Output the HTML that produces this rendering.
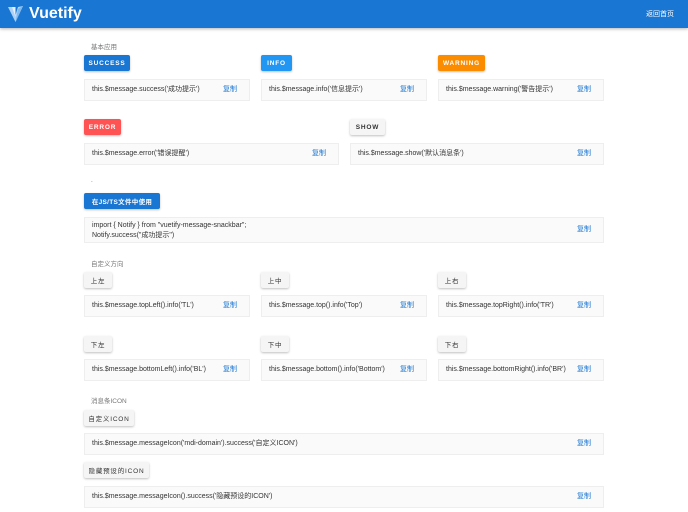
<!DOCTYPE html>
<html><head><meta charset="utf-8"><style>
*{margin:0;padding:0;box-sizing:border-box}
body{width:688px;height:512px;background:#fff;position:relative;overflow:hidden;font-family:"Liberation Sans","Noto Sans CJK SC",sans-serif;color:#333}
.hdr{position:absolute;left:0;top:0;width:688px;height:28px;background:#1976d2;box-shadow:0 1px 3px rgba(0,0,0,.3)}
.logo{position:absolute;left:29px;top:5px;font-size:16px;font-weight:bold;color:#fff}
.back{position:absolute;left:646px;top:9px;font-size:7px;color:#fff}
.lbl{position:absolute;font-size:6.5px;color:#777}
.btn{position:absolute;height:16px;border-radius:2px;font-size:6.5px;font-weight:bold;letter-spacing:.8px;display:flex;align-items:center;justify-content:center;box-shadow:0 1px 2px rgba(0,0,0,.25);color:#fff;white-space:nowrap}
.g{background:#f5f5f5;color:#333;font-weight:normal}
.box{position:absolute;height:22px;background:#fafafa;border:1px solid #eee;font-size:7px;line-height:20px;padding-left:7px;color:#333;white-space:nowrap}
.cp{position:absolute;right:12px;top:0;color:#1976d2;font-size:7px}
</style></head><body>
<div class="hdr">
<svg style="position:absolute;left:8px;top:6px" width="15" height="16" viewBox="0 0 15 16"><polygon points="0,1 5,1 7.5,9 10,1 15,0 7.5,16" fill="#aed2f7"/><polygon points="4,1 7.5,1 7.5,11" fill="#e3f0fd"/><polygon points="7.5,16 10,3 15,0" fill="#7db8f0"/></svg>
<div class="logo">Vuetify</div>
<div class="back">返回首页</div>
</div>

<div class="lbl" style="left:91px;top:41px">基本应用</div>
<div class="btn" style="left:84px;top:55px;width:46px;background:#1976d2">SUCCESS</div>
<div class="btn" style="left:261px;top:55px;width:31px;background:#2196f3">INFO</div>
<div class="btn" style="left:438px;top:55px;width:47px;background:#fb8c00">WARNING</div>
<div class="box" style="left:84px;top:79px;width:166px">this.$message.success('成功提示')<span class="cp">复制</span></div>
<div class="box" style="left:261px;top:79px;width:166px">this.$message.info('信息提示')<span class="cp">复制</span></div>
<div class="box" style="left:438px;top:79px;width:166px">this.$message.warning('警告提示')<span class="cp">复制</span></div>

<div class="btn" style="left:84px;top:119px;width:37px;background:#ff5252">ERROR</div>
<div class="btn g" style="left:350px;top:119px;width:35px;font-weight:bold">SHOW</div>
<div class="box" style="left:84px;top:143px;width:255px">this.$message.error('错误提醒')<span class="cp">复制</span></div>
<div class="box" style="left:350px;top:143px;width:254px">this.$message.show('默认消息条')<span class="cp">复制</span></div>

<div class="lbl" style="left:91px;top:177px">.</div>
<div class="btn" style="left:84px;top:193px;width:76px;background:#1976d2;letter-spacing:.3px">在JS/TS文件中使用</div>
<div class="box" style="left:84px;top:217px;width:520px;height:26px;line-height:10px;padding-top:3px">import { Notify } from "vuetify-message-snackbar";<br>Notify.success("成功提示")<span class="cp" style="top:7px">复制</span></div>

<div class="lbl" style="left:91px;top:258px">自定义方向</div>
<div class="btn g" style="left:84px;top:272px;width:28px">上左</div>
<div class="btn g" style="left:261px;top:272px;width:28px">上中</div>
<div class="btn g" style="left:438px;top:272px;width:28px">上右</div>
<div class="box" style="left:84px;top:295px;width:166px">this.$message.topLeft().info('TL')<span class="cp">复制</span></div>
<div class="box" style="left:261px;top:295px;width:166px">this.$message.top().info('Top')<span class="cp">复制</span></div>
<div class="box" style="left:438px;top:295px;width:166px">this.$message.topRight().info('TR')<span class="cp">复制</span></div>

<div class="btn g" style="left:84px;top:336px;width:28px">下左</div>
<div class="btn g" style="left:261px;top:336px;width:28px">下中</div>
<div class="btn g" style="left:438px;top:336px;width:28px">下右</div>
<div class="box" style="left:84px;top:359px;width:166px">this.$message.bottomLeft().info('BL')<span class="cp">复制</span></div>
<div class="box" style="left:261px;top:359px;width:166px">this.$message.bottom().info('Bottom')<span class="cp">复制</span></div>
<div class="box" style="left:438px;top:359px;width:166px">this.$message.bottomRight().info('BR')<span class="cp">复制</span></div>

<div class="lbl" style="left:91px;top:395px">消息条ICON</div>
<div class="btn g" style="left:84px;top:410px;width:50px">自定义ICON</div>
<div class="box" style="left:84px;top:433px;width:520px">this.$message.messageIcon('mdi-domain').success('自定义ICON')<span class="cp">复制</span></div>
<div class="btn g" style="left:84px;top:462px;width:65px">隐藏预设的ICON</div>
<div class="box" style="left:84px;top:486px;width:520px">this.$message.messageIcon().success('隐藏预设的ICON')<span class="cp">复制</span></div>
</body></html>
